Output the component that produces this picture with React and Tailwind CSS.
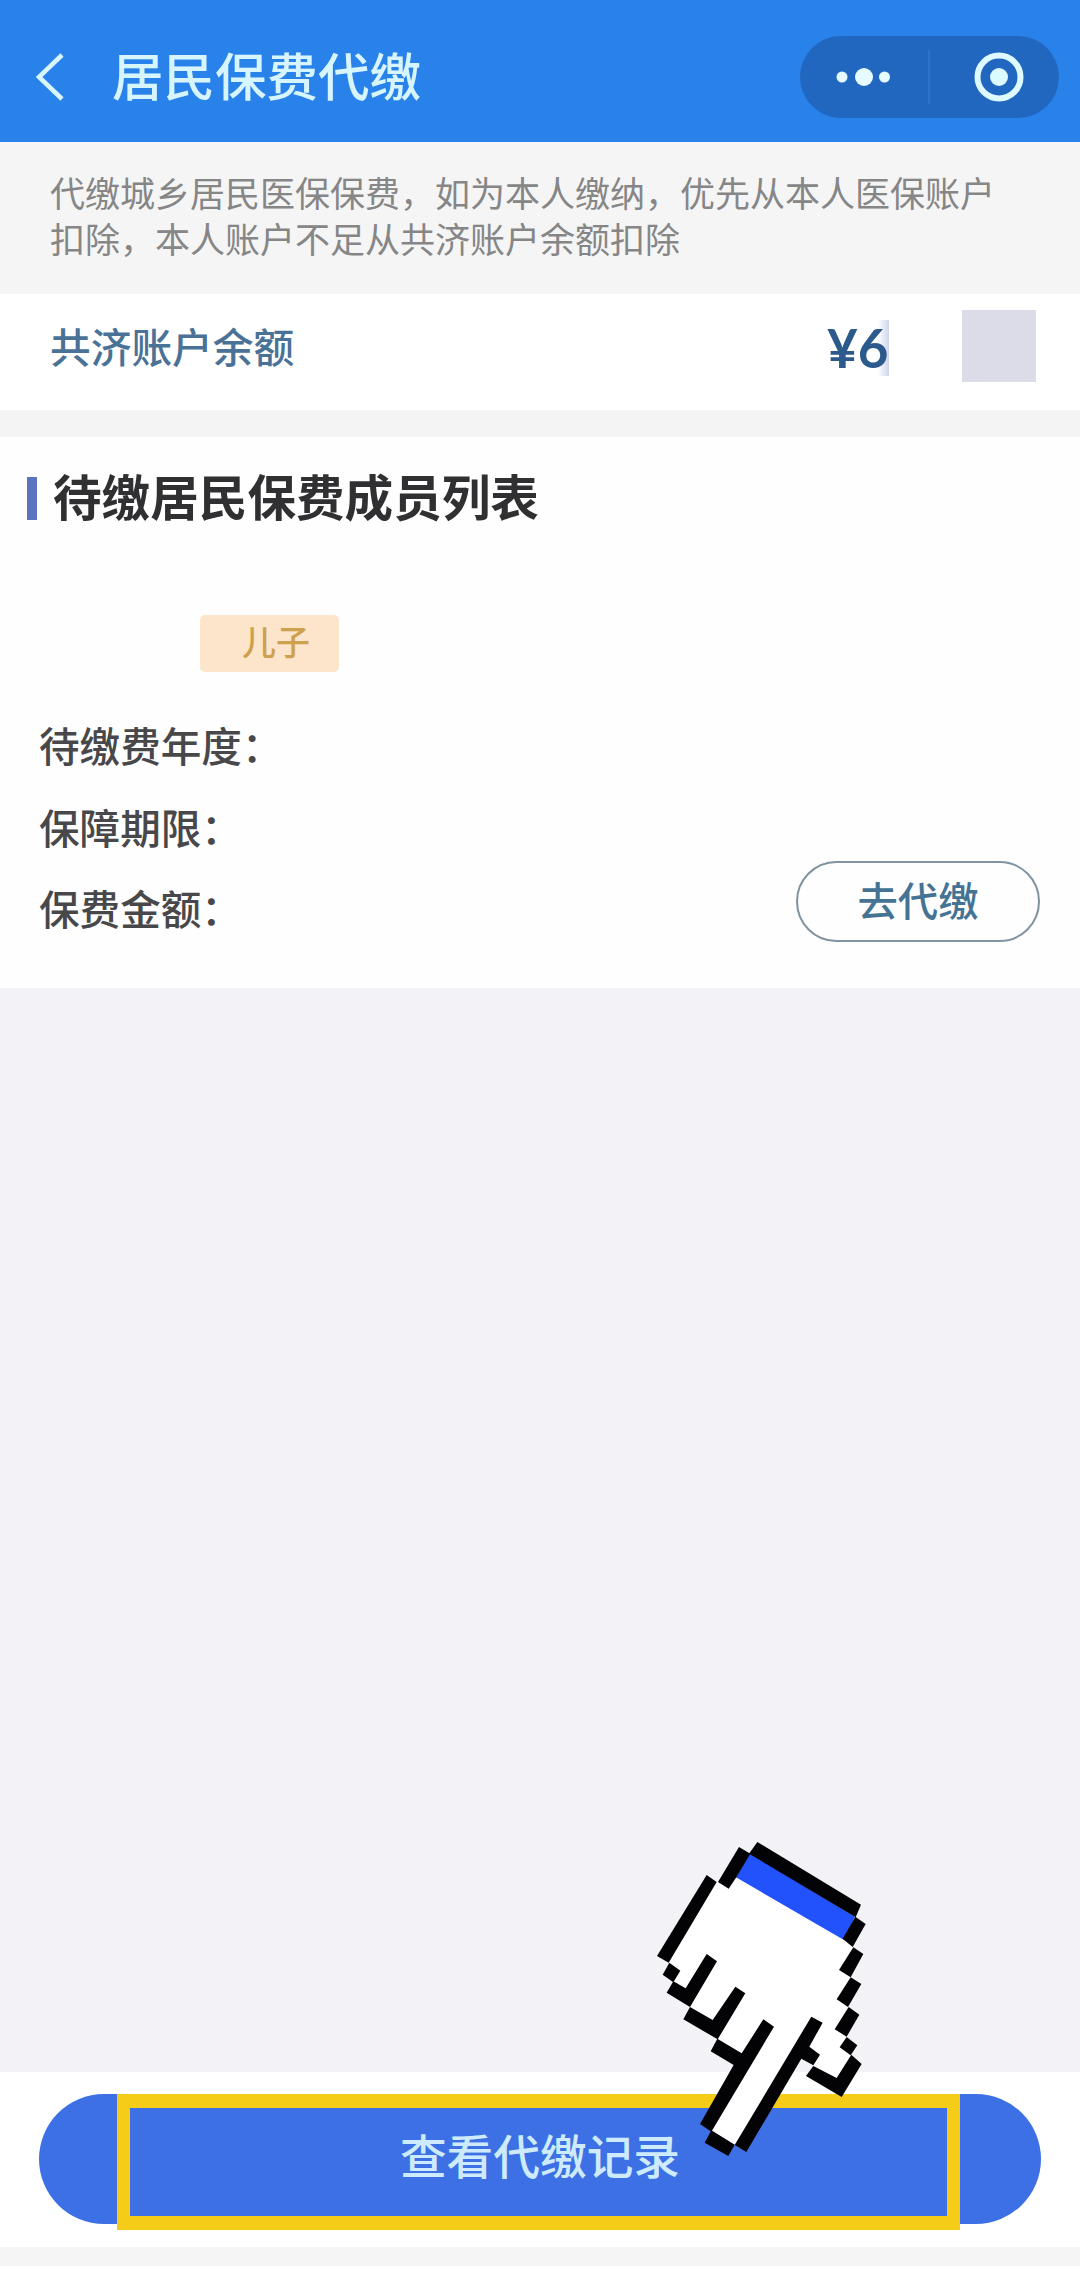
const details = ['待缴费年度：', '保障期限：', '保费金额：'];

const Header = () => (
  <header className="flex h-[142px] items-center justify-between bg-[#2882ea] pt-3 pr-[21px] pl-[34px]">
    <div className="flex items-center">
      <svg width="32" height="50" viewBox="0 0 32 50" fill="none" stroke="#d9f5ff" strokeWidth="4.5">
        <path d="M28 3 L5 25 L28 47" />
      </svg>
      <h1 className="ml-[46px] pb-[6px] text-[51.5px] leading-[60px] font-medium text-[#d6f5ff]">居民保费代缴</h1>
    </div>

    <div className="flex h-[82px] w-[259px] items-center rounded-full bg-[#2267bf]">
      <svg width="128" height="60" viewBox="0 0 128 60" fill="#e6fbff">
        <circle cx="42" cy="30" r="5.5" />
        <circle cx="64" cy="30" r="9" />
        <circle cx="84.500" cy="30" r="5.5" />
      </svg>
      <div className="h-[54px] w-[2px] bg-[#2a72ca]" />
      <svg className="ml-[43px]" width="52" height="52" viewBox="0 0 52 52">
        <circle cx="26" cy="26" r="21.5" fill="none" stroke="#dcfaff" strokeWidth="6" />
        <circle cx="26" cy="26" r="9" fill="#dcfaff" />
      </svg>
    </div>
  </header>
);

const Balance = () => (
  <section className="flex h-[116px] items-center justify-between bg-white pr-11 pb-[12px] pl-[50px]">
    <span className="text-[40.7px] leading-[48px] font-medium text-[#4a7296]">共济账户余额</span>
    <div className="flex items-center">
      <div className="mt-[3px] flex w-[62px] bg-linear-to-r from-white from-82% to-[#cfd6ec]">
        <span className="font-['Lato'] text-[53px] leading-[56px] font-bold text-[#2c5a8c]">¥6</span>
      </div>
      <div className="ml-[73px] h-[72px] w-[74px] bg-[#dbdce7]" />
    </div>
  </section>
);

const Members = () => (
  <section className="flex h-[551px] flex-col bg-[#fefefe]">
    <div className="mt-[31px] flex items-center pl-[27px]">
      <div className="mt-[7px] h-[43px] w-[10px] bg-[#5a74bf]" />
      <h2 className="ml-[16px] text-[48.6px] leading-[54px] font-bold text-[#303032]">待缴居民保费成员列表</h2>
    </div>

    <div className="mt-[93px] ml-[200px] flex h-[57px] w-[139px] items-center rounded-[5px] bg-[#fce5ca] pb-[5px] pl-[42px]">
      <span className="text-[34px] leading-[40px] font-medium text-[#cda14d]">儿子</span>
    </div>

    <div className="mt-[32px] flex justify-between pr-[40px] pl-[39px]">
      <ul>
        {details.map((label) => (
          <li key={label} className="text-[40.6px] leading-[81.7px] font-medium text-[#48484a]">{label}</li>
        ))}
      </ul>
      <button className="mt-[157px] flex h-[81px] w-[244px] items-center justify-center rounded-full border-[2.5px] border-[#7f93a0] pb-1 text-[40.3px] font-medium text-[#447394]">
        去代缴
      </button>
    </div>
  </section>
);

// Pixel-style glove pointing down at the button
const Hand = () => (
  <svg className="absolute top-[1820px] left-[640px]" width="240" height="350" viewBox="0 0 720 1050">
    <path
      fill="#fff"
      d="M215 176 L250 196 L290 172 L610 358 L638 381 L632 472 L624 560 L620 650 L632 706 L590 776 L520 738 L500 700 L484 716 L300 984 L214 932 L300 740 L300 705 L232 658 L215 612 L150 560 L130 515 L100 486 L88 428 L75 405 Z"
    />
    <path fill="#2152fb" d="M329 100 L645 290 L612 360 L288 172 Z" />
    <g fill="#030305">
      <path d="M352 66 L663 254 L647 292 L327 101 Z" />
      <path d="M297 81 L331 101 L289 172 L266 206 L234 186 Z" />
      <path d="M646 290 L677 312 L638 381 L608 356 Z" />
      <path d="M200 165 L230 186 L86 428 L51 408 Z" />
      <path d="M88 428 L121 452 L100 487 L68 464 Z" />
      <path d="M200 402 L231 424 L150 561 L80 518 L100 484 L137 505 Z" />
      <path d="M286 500 L316 520 L233 658 L130 598 L150 561 L218 600 Z" />
      <path d="M370 598 L402 620 L214 935 L180 912 L281 735 L212 694 L232 656 L305 700 Z" />
      <path d="M214 931 L284 974 L265 1008 L194 968 Z" />
      <path d="M514 590 L548 608 L508 680 L540 704 L520 736 L484 716 L319 996 L284 975 Z" />
      <path d="M520 738 L590 774 L634 704 L665 732 L605 831 L498 768 Z" />
      <path d="M620 651 L652 676 L632 706 L599 682 Z" />
      <path d="M626 561 L658 584 L620 650 L584 628 Z" />
      <path d="M632 472 L664 492 L624 561 L590 538 Z" />
      <path d="M640 382 L670 402 L632 472 L597 450 Z" />
    </g>
  </svg>
);

const App = () => (
  <div className="relative flex h-[2270px] w-[1080px] flex-col overflow-hidden bg-[#f3f2f6] font-['Noto_Sans_CJK_SC',sans-serif]">
    <Header />

    <p className="h-[152px] bg-[#f5f5f6] pt-[27px] pl-[50px] text-[35px] leading-[46px] text-[#868686]">
      代缴城乡居民医保保费，如为本人缴纳，优先从本人医保账户
      <br />
      扣除，本人账户不足从共济账户余额扣除
    </p>

    <Balance />
    <div className="h-[27px] bg-[#f4f4f4]" />
    <Members />

    <footer className="mt-auto">
      <div className="flex h-[175px] justify-center bg-white pt-[22px]">
        <button className="flex h-[130px] w-[1002px] items-center justify-center rounded-full bg-[#3d70e4] pb-[9px] text-[46.7px] font-medium text-[#cdebfc]">
          查看代缴记录
        </button>
      </div>
      <div className="h-[23px] border-b-4 border-white bg-[#f5f5f5]" />
    </footer>

    {/* Highlight frame */}
    <div className="absolute top-[2094px] left-[117px] h-[136px] w-[843px] border-x-[13px] border-y-[14px] border-[#f5cc17]" />
    <Hand />
  </div>
);

export default App;
